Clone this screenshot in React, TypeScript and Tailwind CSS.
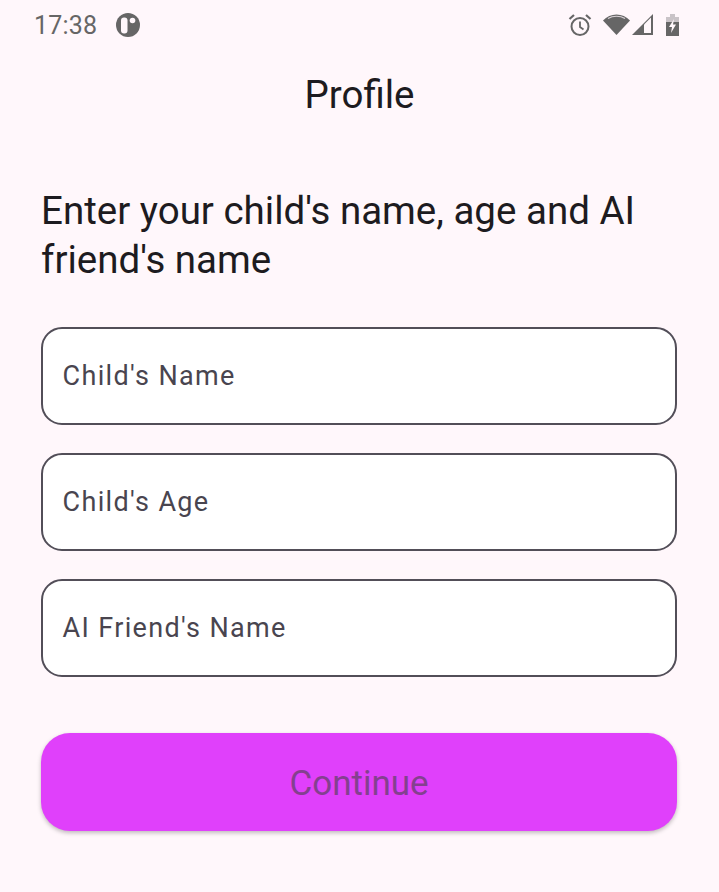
const fields = ["Child's Name", "Child's Age", "AI Friend's Name"]

function StatusBar() {
  return (
    <div className="flex h-[50px] items-center justify-between pl-[34px] pr-[40px] text-[#666666]">
      <div className="flex items-center gap-[19px]">
        <span className="text-[25px] leading-none tracking-[0.2px]">17:38</span>
        <svg width="24" height="24" viewBox="0 0 24 24">
          <circle cx="12" cy="12" r="12" fill="#666666" />
          <rect x="5" y="4.500" width="6.500" height="16" rx="3" fill="#fff7fb" />
          <circle cx="16.500" cy="7.500" r="2.800" fill="#fff7fb" />
        </svg>
      </div>
      <div className="mb-[1px] flex items-center">
        <svg width="24" height="24" viewBox="0 0 24 24" className="mr-[11px]">
          <circle cx="12" cy="13.5" r="8.5" fill="none" stroke="#666666" strokeWidth="2" />
          <path d="M12 8.500v5.500l3.500 2.500" fill="none" stroke="#666666" strokeWidth="1.800" />
          <path d="M1.500 6l4.500-4M22.500 6l-4.500-4" fill="none" stroke="#666666" strokeWidth="2.200" />
        </svg>
        <svg width="27" height="22" viewBox="0 0 27 22" className="mr-[2px]">
          <path d="M0 6.500C7-1.500 20-1.500 27 6.500L13.500 21z" fill="#666666" />
          <path d="M5 4.500C10 1.500 17 1.500 22 4.500" fill="none" stroke="#d9d2d6" strokeWidth="1.200" />
        </svg>
        <svg width="22" height="22" viewBox="0 0 22 22" className="mr-[12px]">
          <path d="M0 21L21 0v21z" fill="#666666" />
          <path d="M12 19V10.500l7-7V19z" fill="#fff7fb" />
        </svg>
        <svg width="13" height="22" viewBox="0 0 13 22">
          <path d="M0 3h4V0h5v3h4v19H0z" fill="#c9c3c7" />
          <path d="M0 8h13v14H0z" fill="#666666" />
          <path d="M8 5L3 13h3l-1 6 5-8.500H7z" fill="#fff7fb" />
        </svg>
      </div>
    </div>
  )
}

export default function App() {
  return (
    <div className="h-[892px] w-[719px] overflow-hidden bg-[#fff7fb] font-['Roboto',sans-serif]">
      <StatusBar />
      <h1 className="mt-[20px] h-[50px] text-center text-[38.5px] leading-[50px] text-[#1d1b20]">Profile</h1>
      <div className="pl-[41px] pr-[42px] pt-[66px]">
        <p className="text-[38.5px] leading-[49px] text-[#1d1b20]">
          Enter your child's name, age and AI friend's name
        </p>
        <div className="mt-[43px] flex flex-col gap-[28px]">
          {fields.map((label) => (
            <div
              key={label}
              className="flex h-[98px] items-center rounded-[21px] border-2 border-[#524e58] bg-white pl-[19.5px] text-[27px] tracking-[1.35px] text-[#49454f]"
            >
              {label}
            </div>
          ))}
        </div>
        <button className="mt-[56px] flex h-[98px] w-full items-center justify-center rounded-[29px] bg-[#e040fb] pt-[4px] text-[35px] text-[#84408f] shadow-[0_2px_4px_rgba(0,0,0,0.25)]">
          Continue
        </button>
      </div>
    </div>
  )
}
